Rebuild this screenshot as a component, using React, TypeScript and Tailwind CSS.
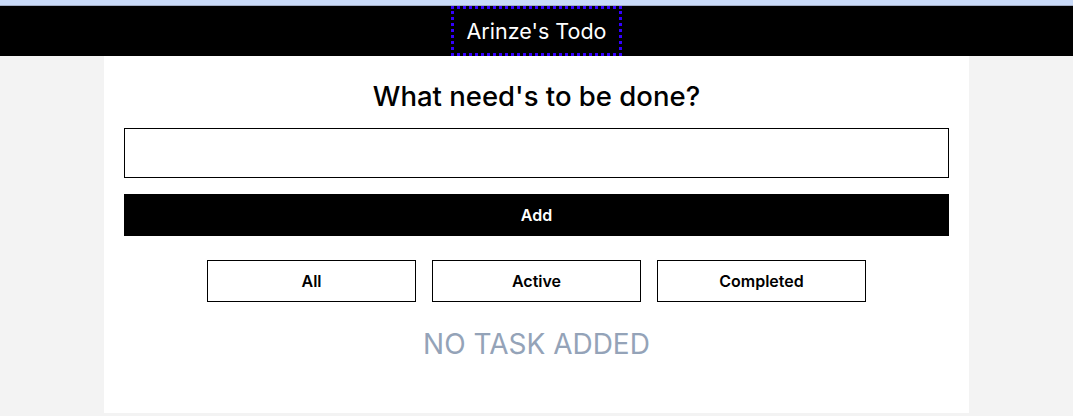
export default function App() {
  return (
    <div className="min-h-screen bg-[#f3f3f3] font-['Inter',sans-serif]">
      <div className="h-[6px] border-b border-[#a3aec6] bg-[#c9daf8]" />
      <header className="flex h-[50px] justify-center bg-black">
        <h1 className="flex h-full items-center border-[3px] border-dotted border-[#3300ff] px-[13px] text-[21.5px] font-normal text-white">
          Arinze's Todo
        </h1>
      </header>

      <main className="mx-auto w-[865px] bg-white px-5 pt-5 pb-[49px]">
        <h2 className="text-center text-[27.5px] leading-[40px] font-medium text-black">What need's to be done?</h2>
        <input type="text" className="mt-3 block h-[50px] w-full border border-black px-3 text-base outline-none" />
        <button className="mt-4 flex h-[42px] w-full items-center justify-center bg-black text-base font-semibold text-white">
          Add
        </button>

        <div className="mt-6 flex justify-center gap-4">
          {['All', 'Active', 'Completed'].map((label) => (
            <button
              key={label}
              className="flex h-[42px] w-[209px] items-center justify-center border border-black bg-white text-base font-semibold text-black"
            >
              {label}
            </button>
          ))}
        </div>

        <p className="mt-[22px] text-center text-[28px] leading-[40px] text-[#94a3b8]">NO TASK ADDED</p>
      </main>
    </div>
  )
}
